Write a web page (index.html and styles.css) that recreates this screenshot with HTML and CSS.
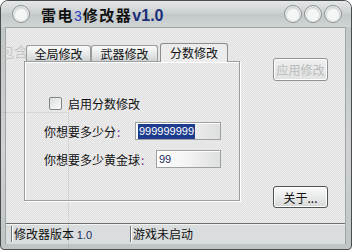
FILE: index.html
```html
<!DOCTYPE html>
<html lang="zh">
<head>
  <meta charset="UTF-8">
  <title>雷电3修改器v1.0</title>
  <link rel="stylesheet" href="styles.css">
</head>
<body>
  <div class="window">
    <div class="titlebar">
      <span class="orb"></span>
      <span class="title">雷电<b class="num">3</b>修改器<b class="ver">v1.0</b></span>
      <span class="orbs">
        <span class="orb"></span>
        <span class="orb"></span>
        <span class="orb"></span>
      </span>
    </div>

    <div class="client">
      <div class="ghost-text">包含</div>
      <div class="ghost-box"></div>

      <div class="main">
        <div class="tabctl">
          <div class="tabs">
            <span class="tab">全局修改</span>
            <span class="tab">武器修改</span>
            <span class="tab active">分数修改</span>
          </div>
          <div class="panel">
            <label class="check"><span class="box"></span>启用分数修改</label>
            <div class="row first">
              <span>你想要多少分<i>:</i></span>
              <span class="field wide"><span class="sel">999999999</span></span>
            </div>
            <div class="row">
              <span>你想要多少黄金球<i>:</i></span>
              <span class="field narrow">99</span>
            </div>
          </div>
        </div>

        <div class="side">
          <button class="btn" disabled>应用修改</button>
          <button class="btn about">关于...</button>
        </div>
      </div>

      <div class="status">
        <span class="cell ver-cell">修改器版本 <em>1.0</em></span>
        <span class="cell">游戏未启动</span>
      </div>
    </div>
  </div>
</body>
</html>
```

FILE: styles.css
```css
body {
  margin: 0;
  padding: 0;
  background: #ffffff;
  font-family: "Noto Sans CJK SC", "Liberation Sans", sans-serif;
  font-size: 12px;
  color: #111;
}
.window {
  width: 352px;
  height: 250px;
  box-sizing: border-box;
  border: 1px solid #4a4d4d;
  border-radius: 8px 8px 4px 4px;
  background: linear-gradient(#d4d8d8, #c2c7c7 12%, #cfd3d3 60%, #bfc4c4);
  display: flex;
  flex-direction: column;
  overflow: hidden;
}
.titlebar {
  height: 26px;
  display: flex;
  align-items: center;
  padding: 0 9px 0 11px;
  background: linear-gradient(#e4e7e7, #cdd1d1 45%, #c3c8c8 55%, #d0d4d4);
}
.orb {
  width: 16px;
  height: 16px;
  border-radius: 50%;
  border: 1px solid #8d9393;
  background: radial-gradient(circle at 50% 55%, #f4f6f6 0 45%, #c9cece 62%, #e9ecec 80%, #a7adad);
  box-shadow: inset 0 0 0 1px #eef0f0;
}
.title {
  margin-left: 11px;
  font-size: 15px;
  font-weight: bold;
  letter-spacing: 1.5px;
  color: #111;
  flex: 1;
}
.title b {
  font-family: "Liberation Sans", sans-serif;
}
.title .num {
  color: #1f3cc0;
  font-weight: normal;
  font-size: 14px;
  letter-spacing: 1px;
}
.title .ver {
  color: #1a2f7a;
  letter-spacing: 0;
  font-size: 16px;
}
.orbs {
  display: flex;
  gap: 2px;
}
.client {
  position: relative;
  margin: 0 5px 5px 4px;
  flex: 1;
  display: flex;
  flex-direction: column;
  background: repeating-conic-gradient(#e1e1e1 0 25%, #ececec 0 50%) 0 0 / 2px 2px;
  border: 1px solid #9fa4a4;
  border-bottom: none;
}
.ghost-text {
  position: absolute;
  left: -6px;
  top: 13px;
  font-size: 14px;
  color: #c6c6c6;
  white-space: nowrap;
}
.ghost-box {
  position: absolute;
  left: -4px;
  top: 84px;
  width: 66px;
  height: 140px;
  border-top: 1px solid rgba(0,0,0,0.07);
  border-right: 1px solid rgba(0,0,0,0.07);
}
.main {
  position: relative;
  flex: 1;
  display: flex;
  padding: 15px 0 0 18px;
}
.tabctl {
  width: 216px;
}
.tabs {
  display: flex;
  align-items: flex-end;
  height: 18px;
  padding-left: 2px;
}
.tab {
  height: 15px;
  line-height: 15px;
  width: 63px;
  text-align: center;
  border: 1px solid #979b9b;
  border-bottom: none;
  border-radius: 3px 3px 0 0;
  background: linear-gradient(#fbfbfb, #e4e6e6 60%, #cfd2d2);
  font-size: 12px;
}
.tab:nth-child(2) {
  width: 65px;
}
.tab.active {
  position: relative;
  height: 18px;
  line-height: 18px;
  width: 66px;
  margin: 0 0 -1px 2px;
  background: #ececec;
  border-color: #8a8e8e;
  z-index: 1;
}
.panel {
  height: 140px;
  box-sizing: border-box;
  border: 1px solid #9a9e9e;
  box-shadow: inset 1px 1px 0 #ffffff, 1px 1px 0 #ffffff;
  padding-top: 35px;
}
.check {
  display: flex;
  align-items: center;
  padding-left: 24px;
  height: 13px;
}
.box {
  width: 11px;
  height: 11px;
  border: 1px solid #7e8484;
  border-radius: 2px;
  background: linear-gradient(135deg, #dcdede, #fbfbfb);
  margin-right: 6px;
}
.row {
  display: flex;
  align-items: center;
  justify-content: space-between;
  padding: 0 18px 0 19px;
  margin-top: 10px;
  height: 18px;
}
.row.first {
  margin-top: 12px;
}
.row i {
  font-style: normal;
  color: #7a2a88;
  margin-left: 1px;
}
.field {
  box-sizing: border-box;
  border: 1px solid #9da1a1;
  box-shadow: inset 1px 1px 0 #ffffff;
  background: linear-gradient(to right, #ffffff, #f3f3f3 50%, #dedfdf);
  font-family: "Liberation Sans", sans-serif;
  font-size: 11px;
  padding-left: 2px;
  height: 18px;
  line-height: 16px;
}
.field.wide {
  width: 86px;
}
.field.narrow {
  width: 65px;
  color: #1b2a5a;
}
.sel {
  background: #1e3c8e;
  color: #ffffff;
  padding: 1px 1px 2px;
}
.side {
  margin-left: 33px;
  width: 55px;
  height: 165px;
  display: flex;
  flex-direction: column;
  padding-top: 15px;
  box-sizing: border-box;
}
.btn {
  width: 55px;
  height: 23px;
  padding: 0;
  font-family: "Noto Sans CJK SC", sans-serif;
  font-size: 12px;
  color: #111;
  border: 1px solid #4f5353;
  border-radius: 3px;
  background: linear-gradient(#fbfbfb, #e9eaea 50%, #d5d7d7);
  box-shadow: inset 0 0 0 1px #ffffff;
}
.btn:disabled {
  color: #b9bcbc;
  border-color: #8f9393;
  background: linear-gradient(#efefef, #e0e1e1);
}
.btn.about {
  margin-top: auto;
  height: 22px;
}
.status {
  height: 20px;
  display: flex;
  align-items: center;
  border-top: 1px solid #6c7070;
  background: #dadddd;
  box-shadow: inset 0 1px 0 #f2f3f3;
}
.cell {
  height: 16px;
  line-height: 16px;
  padding-left: 2px;
  border-left: 1px solid #6f7373;
  box-shadow: inset 1px 0 0 #ffffff;
}
.ver-cell {
  margin-left: 5px;
  width: 116px;
}
.cell em {
  font-style: normal;
  font-family: "Liberation Sans", sans-serif;
  font-size: 11px;
  color: #1b2a5a;
}
```
